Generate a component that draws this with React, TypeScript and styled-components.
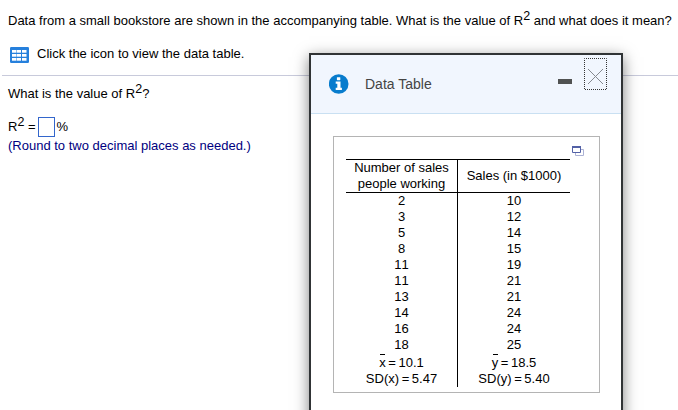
import React from "react";
import styled, { createGlobalStyle } from "styled-components";

const GlobalStyle = createGlobalStyle`
  * { box-sizing: border-box; }
  body {
    margin: 0;
    background: #fff;
    color: #000;
    font: 13px/16px "Liberation Sans", Arial, sans-serif;
    font-kerning: none;
    overflow: hidden;
  }
`;

const Page = styled.main`
  position: relative;
  width: 678px;
  height: 410px;
  overflow: hidden;
  background: #fff;
`;

const Text = styled.p<{ $color?: string }>`
  margin: 0;
  height: 16px;
  white-space: nowrap;
  color: ${(p) => p.$color ?? "#000"};
`;

const Sup = styled.sup`
  font-size: 12.5px;
  line-height: 0;
  vertical-align: 5px;
`;

const Prompt = styled.section`
  height: 76px;
  margin-left: 2px;
  padding: 13px 0 0 6px;
  border-bottom: 1px solid #c8cadb;
`;

const DataLink = styled.div`
  display: flex;
  align-items: flex-start;
  gap: 8px;
  margin-top: 17px;
  padding-left: 2px;

  svg {
    display: block;
    margin-top: 1px;
  }
`;

const Question = styled.section`
  padding: 10px 0 0 8px;
`;

const AnswerRow = styled.div`
  display: flex;
  height: 20px;
  margin-top: 15px;
  margin-bottom: 1px;
`;

const AnswerText = styled(Text)`
  margin-top: 2px;
`;

const AnswerInput = styled.input`
  width: 17px;
  height: 20px;
  margin: 0 2px;
  padding: 0;
  border: 1px solid #3366cc;
  border-radius: 0;
  background: #fff;
  outline: none;
`;

const Dialog = styled.aside`
  position: absolute;
  left: 309px;
  top: 53px;
  width: 314px;
  height: 380px;
  border: 2px solid #303335;
  background: #fff;
  box-shadow: 0 4px 14px rgba(0, 0, 0, 0.5);
`;

const DialogHeader = styled.header`
  display: flex;
  align-items: flex-start;
  height: 59px;
  padding: 0 14px 0 18px;
  border-bottom: 1px solid #c9e0f2;
  background: #f1f6fe;
`;

const InfoIcon = styled.svg`
  display: block;
  margin-top: 19px;
`;

const DialogTitle = styled.h1`
  flex: 1;
  margin: 20px 0 0 16px;
  color: #444;
  font-size: 14px;
  font-weight: 400;
  line-height: 18px;
  font-kerning: normal;
`;

const HeaderButton = styled.button<{ $close?: boolean }>`
  display: block;
  width: ${(p) => (p.$close ? 23 : 14)}px;
  height: ${(p) => (p.$close ? 32 : 5)}px;
  margin: ${(p) => (p.$close ? "3px 0 0 12px" : "24px 0 0")};
  padding: 0;
  border: 0;
  background: ${(p) => (p.$close ? "transparent" : "#505252")};

  svg {
    display: block;
  }
`;

const Panel = styled.div`
  display: flex;
  align-items: flex-start;
  width: 267px;
  height: 257px;
  margin: 22px 0 0 22px;
  padding: 22px 0 0 12px;
  border: 1px solid #b4b4b4;
`;

const Table = styled.table`
  width: 224px;
  table-layout: fixed;
  border-collapse: separate;
  border-spacing: 0;
  text-align: center;
`;

const HeadCell = styled.th`
  height: 34px;
  padding: 0;
  border-top: 1px solid #000;
  border-bottom: 1px solid #000;
  font-weight: 400;
  white-space: nowrap;

  &:first-child {
    width: 112px;
    border-right: 1px solid #000;
  }
`;

const Cell = styled.td<{ $mean?: boolean }>`
  height: ${(p) => (p.$mean ? 18 : 16)}px;
  padding: ${(p) => (p.$mean ? "2px 0 0" : "0")};
  line-height: 16px;
  white-space: nowrap;

  &:first-child {
    border-right: 1px solid #000;
  }
`;

const Stat = styled.span`
  word-spacing: -1px;
`;

const Barred = styled.span`
  position: relative;

  &::before {
    content: "";
    position: absolute;
    left: 1px;
    top: -1px;
    width: 5px;
    height: 1px;
    background: #000;
  }
`;

const CopyIcon = styled.svg`
  display: block;
  margin: -13px 0 0 2px;
`;

const rows: [number, number][] = [
  [2, 10],
  [3, 12],
  [5, 14],
  [8, 15],
  [11, 19],
  [11, 21],
  [13, 21],
  [14, 24],
  [16, 24],
  [18, 25],
];

const GridIcon = () => (
  <svg width="19" height="16" viewBox="0 0 19 16">
    <rect width="19" height="16" rx="1.2" fill="#2680dc" />
    {[3, 7, 11].map((y) =>
      [2, 7, 12].map((x) => (
        <rect key={`${x}-${y}`} x={x} y={y} width={x === 7 ? 4 : 4.5} height="2.7" fill="#fff" />
      ))
    )}
  </svg>
);

export default function App() {
  return (
    <>
      <GlobalStyle />
      <Page>
        <Prompt>
          <Text>
            Data from a small bookstore are shown in the accompanying table. What is the value of R
            <Sup>2</Sup> and what does it mean?
          </Text>
          <DataLink>
            <GridIcon />
            <Text>Click the icon to view the data table.</Text>
          </DataLink>
        </Prompt>
        <Question>
          <Text>
            What is the value of R<Sup>2</Sup>?
          </Text>
          <AnswerRow>
            <AnswerText>
              R<Sup>2</Sup> =
            </AnswerText>
            <AnswerInput aria-label="R squared, percent" />
            <AnswerText>%</AnswerText>
          </AnswerRow>
          <Text $color="#000080">(Round to two decimal places as needed.)</Text>
        </Question>

        <Dialog>
          <DialogHeader>
            <InfoIcon width="20" height="20" viewBox="0 0 20 20">
              <circle cx="9.7" cy="10" r="9.8" fill="#087ccd" />
              <rect x="7.9" y="3.2" width="3.4" height="3" rx="0.4" fill="#fff" />
              <path d="M6.7 7.6h4.8v6.2h1.4V16h-6.2v-2.2h1.6v-4H6.7z" fill="#fff" />
            </InfoIcon>
            <DialogTitle>Data Table</DialogTitle>
            <HeaderButton aria-label="Minimize" />
            <HeaderButton $close aria-label="Close">
              <svg width="23" height="32" viewBox="0 0 23 32">
                <rect
                  x="0.5"
                  y="0.5"
                  width="22"
                  height="31"
                  fill="none"
                  stroke="#333"
                  strokeDasharray="1 1"
                  strokeDashoffset="0.5"
                />
                <path d="M4 11 19 26M19 11 4 26" fill="none" stroke="#858990" />
              </svg>
            </HeaderButton>
          </DialogHeader>
          <Panel>
            <Table>
              <thead>
                <tr>
                  <HeadCell>
                    Number of sales
                    <br />
                    people working
                  </HeadCell>
                  <HeadCell>Sales (in $1000)</HeadCell>
                </tr>
              </thead>
              <tbody>
                {rows.map(([people, sales], i) => (
                  <tr key={i}>
                    <Cell>{people}</Cell>
                    <Cell>{sales}</Cell>
                  </tr>
                ))}
                <tr>
                  <Cell $mean>
                    <Stat>
                      <Barred>x</Barred> = 10.1
                    </Stat>
                  </Cell>
                  <Cell $mean>
                    <Stat>
                      <Barred>y</Barred> = 18.5
                    </Stat>
                  </Cell>
                </tr>
                <tr>
                  <Cell>
                    <Stat>SD(x) = 5.47</Stat>
                  </Cell>
                  <Cell>
                    <Stat>SD(y) = 5.40</Stat>
                  </Cell>
                </tr>
              </tbody>
            </Table>
            <CopyIcon width="12" height="10" viewBox="0 0 12 10">
              <path d="M9 3.5h2.5v6h-8V7" fill="none" stroke="#acb2d5" />
              <path d="M.5 1v5.5h8V1" fill="#fff" stroke="#5361a6" />
              <path d="M0 0h9v2H0z" fill="#5361a6" />
            </CopyIcon>
          </Panel>
        </Dialog>
      </Page>
    </>
  );
}
